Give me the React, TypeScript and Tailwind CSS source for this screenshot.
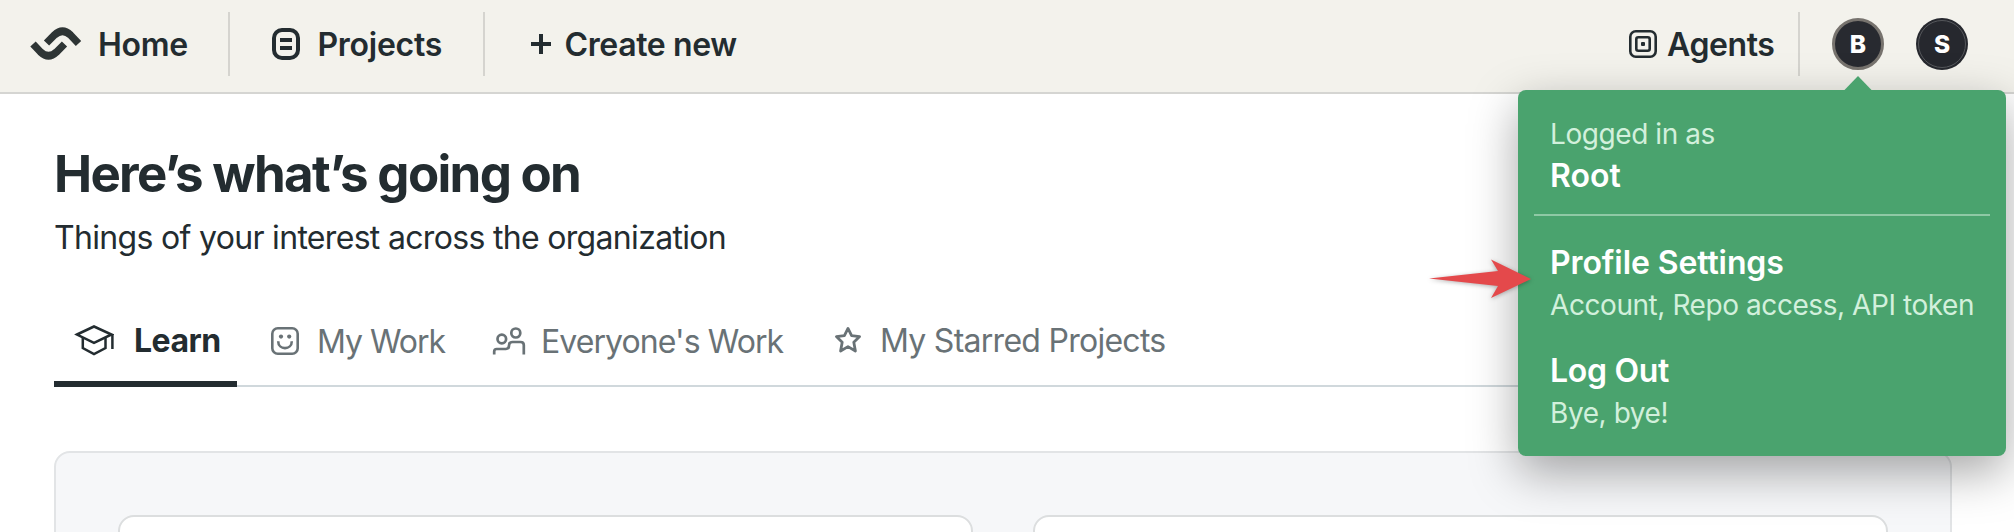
import React from "react";

function Text({ children, className }: { children: React.ReactNode; className: string }) {
  return <span className={"block whitespace-nowrap " + className}>{children}</span>;
}

function Logo() {
  return (
    <svg className="shrink-0" width="52" height="36" viewBox="0 0 52 36" fill="none" stroke="#2e3535" strokeWidth="7.4">
      <path d="M3 18 L10.5 26 Q18.5 33.5 26.5 26 L34.5 18" />
      <path d="M16.5 17 L24.5 9 Q32.5 1.5 40.5 9 L48.5 17.5" />
    </svg>
  );
}

function ProjectsIcon() {
  return (
    <svg className="shrink-0" width="28" height="32" viewBox="0 0 28 32" fill="none" stroke="#232c30" strokeWidth="4">
      <rect x="2" y="2" width="24" height="28" rx="8" />
      <path d="M8 12h12M8 20h12" />
    </svg>
  );
}

function PlusIcon() {
  return (
    <svg className="shrink-0" width="20" height="20" viewBox="0 0 20 20" stroke="#232c30" strokeWidth="4">
      <path d="M10 0v20M0 10h20" />
    </svg>
  );
}

function AgentsIcon() {
  return (
    <svg className="shrink-0" width="28" height="28" viewBox="0 0 28 28" fill="none" stroke="#232c30" strokeWidth="2.6">
      <rect x="1.3" y="1.3" width="25.4" height="25.4" rx="5.5" />
      <rect x="7.3" y="7.3" width="13.4" height="13.4" rx="2" />
      <rect x="12" y="12" width="4" height="4" rx="1" fill="#232c30" stroke="none" />
    </svg>
  );
}

function CapIcon() {
  return (
    <svg className="shrink-0" width="40" height="32" viewBox="0 0 40 32" fill="none" stroke="#232c30" strokeWidth="2.5">
      <path d="M3 10.5 L20 2.5 L37.5 10.5 L20 18.8 Z" />
      <path d="M8.8 13 V24 L20 30 L31.5 24 V13" />
      <path d="M38.4 10 V25" />
    </svg>
  );
}

function SmileIcon() {
  return (
    <svg className="shrink-0" width="28" height="28" viewBox="0 0 28 28" fill="none" stroke="#697276" strokeWidth="2.6">
      <rect x="1.3" y="1.3" width="25.4" height="25.4" rx="5.5" />
      <path d="M7.2 14.2 C7.2 23.4 20.8 23.4 20.8 14.2" />
      <circle cx="10" cy="9.6" r="2.1" fill="#697276" stroke="none" />
      <circle cx="18.2" cy="9.6" r="2.1" fill="#697276" stroke="none" />
    </svg>
  );
}

function PeopleIcon() {
  return (
    <svg className="shrink-0" width="34" height="28" viewBox="0 0 34 28" fill="none" stroke="#697276" strokeWidth="2.7">
      <circle cx="9.8" cy="12" r="4.3" />
      <circle cx="23.8" cy="6" r="4.5" />
      <path d="M2.2 27.5 V24.5 Q2.2 22 4.7 22 H14 Q17 22 17 18.5 Q17 15 20.5 15 H28.5 Q31.8 15 31.8 18 V27.5" />
    </svg>
  );
}

function StarIcon() {
  return (
    <svg className="shrink-0" width="28" height="28" viewBox="0 0 28 28" fill="none" stroke="#697276" strokeWidth="2.8" strokeLinejoin="round">
      <path d="M14 2.4 L17.6 9.6 L25.6 10.6 L19.8 16.2 L21.4 25 L14 20.6 L6.6 25 L8.2 16.2 L2.4 10.6 L10.4 9.6 Z" />
    </svg>
  );
}

function Divider() {
  return <div className="h-16 w-0.5 shrink-0 bg-[#d5d4cf]" />;
}

const NAV = "pt-0.5 text-[32px] leading-10 font-semibold text-[#232c30]";

function Header() {
  return (
    <header className="flex h-[94px] border-b-2 border-[#d5d5d2] bg-[#f3f2ec] pt-3">
      <div className="flex h-16 w-full items-center">
        <div className="flex w-[228px] shrink-0 items-center pl-[30px]">
          <Logo />
          <Text className={NAV + " ml-4 tracking-[-0.3px]"}>Home</Text>
        </div>
        <Divider />
        <div className="flex w-[253px] shrink-0 items-center pl-[42px]">
          <ProjectsIcon />
          <Text className={NAV + " ml-[17.5px] tracking-[-0.28px]"}>Projects</Text>
        </div>
        <Divider />
        <div className="flex items-center pl-[46px]">
          <PlusIcon />
          <Text className={NAV + " ml-[13.5px] tracking-[-0.37px]"}>Create new</Text>
        </div>
        <div className="ml-auto flex w-[385px] shrink-0 items-center">
          <div className="flex w-[169px] shrink-0 items-center">
            <AgentsIcon />
            <Text className={NAV + " ml-[10px] tracking-[-0.4px]"}>Agents</Text>
          </div>
          <Divider />
          <div className="ml-8 flex size-[52px] items-center justify-center rounded-full border-[3px] border-[#77736e] bg-[#282a30]">
            <Text className="text-[24.5px] leading-6 font-extrabold text-white">B</Text>
          </div>
          <div className="ml-8 flex size-[52px] items-center justify-center rounded-full bg-[#26282e] p-0.5">
            <div className="flex size-full items-center justify-center rounded-full border border-[#55575b]">
              <Text className="text-[24.5px] leading-6 font-extrabold text-white">S</Text>
            </div>
          </div>
        </div>
      </div>
    </header>
  );
}

const TAB = "pt-0.5 text-[32px] leading-10 text-[#697276]";

function Tabs() {
  return (
    <nav className="mt-[62px] flex h-[67px] border-b-2 border-[#d0d8dc]">
      <div className="flex h-[67px] w-[183px] shrink-0 items-start border-b-[6px] border-[#232c30] pl-5">
        <div className="flex h-10 items-center">
          <CapIcon />
          <Text className="ml-5 pt-0.5 text-[32px] leading-10 font-bold tracking-[-0.5px] text-[#232c30]">Learn</Text>
        </div>
      </div>
      <div className="flex h-[41px] w-[222px] shrink-0 items-center pl-[34px]">
        <SmileIcon />
        <Text className={TAB + " ml-[18px] tracking-[-1.05px]"}>My Work</Text>
      </div>
      <div className="flex h-[41px] w-[342px] shrink-0 items-center pl-[33px]">
        <PeopleIcon />
        <Text className={TAB + " ml-[15px] tracking-[-0.93px]"}>Everyone's Work</Text>
      </div>
      <div className="flex h-10 items-center pl-[33px]">
        <StarIcon />
        <Text className={TAB + " ml-[18px] tracking-[-0.73px]"}>My Starred Projects</Text>
      </div>
    </nav>
  );
}

const HINT = "text-[28px] leading-10 tracking-[-0.43px] text-[#d2f0dc]";

function ProfileMenu() {
  return (
    <div className="absolute top-[90px] left-[1518px] h-[366px] w-[488px] rounded-lg bg-[#4aa36e] px-4 pt-6 shadow-[0_16px_48px_rgba(0,0,0,0.35)]">
      <svg className="absolute -top-[14px] left-[326px]" width="28" height="15" viewBox="0 0 28 15">
        <path d="M0 14.5 L14 0 L28 14.5 Z" fill="#4aa36e" />
      </svg>
      <div className="flex h-[100px] flex-col px-4">
        <Text className={HINT}>Logged in as</Text>
        <Text className="mt-0.5 text-[32px] leading-10 font-semibold text-white">Root</Text>
      </div>
      <div className="h-0.5 bg-[#8fc9a5]" />
      <div className="flex flex-col px-4 pt-[27px]">
        <Text className="text-[32px] leading-10 font-semibold tracking-[-0.1px] text-white">Profile Settings</Text>
        <Text className={HINT + " mt-0.5"}>Account, Repo access, API token</Text>
        <Text className="mt-[26px] text-[32px] leading-10 font-semibold tracking-[-0.3px] text-white">Log Out</Text>
        <Text className={HINT + " mt-0.5"}>Bye, bye!</Text>
      </div>
    </div>
  );
}

function Pointer() {
  return (
    <svg className="absolute top-[254px] left-[1424px] drop-shadow-[0_1px_2px_rgba(0,0,0,0.3)]" width="112" height="48" viewBox="0 0 112 48">
      <path d="M5 24.5 L74 17 L67 5.5 L107 25 L67 44 L74 32 Z" fill="#e4494b" />
    </svg>
  );
}

export default function App() {
  return (
    <div className="relative h-[532px] w-[2014px] overflow-hidden bg-white font-[Inter,sans-serif]">
      <Header />
      <main className="flex flex-col pr-[62px] pl-[54px]">
        <Text className="mt-[48px] text-[51px] leading-[64px] font-bold tracking-[-1.7px] text-[#232c30]">Here’s what’s going on</Text>
        <Text className="mt-[12px] text-[32px] leading-10 tracking-[-0.68px] text-[#232c30]">Things of your interest across the organization</Text>
        <Tabs />
        <section className="mt-16 flex h-[200px] gap-[60px] rounded-2xl border-2 border-[#e2e4e6] bg-[#f6f7f9] px-[62px] pt-[62px]">
          <div className="h-40 flex-1 rounded-2xl border-2 border-[#dcdedf] bg-white" />
          <div className="h-40 flex-1 rounded-2xl border-2 border-[#dcdedf] bg-white" />
        </section>
      </main>
      <ProfileMenu />
      <Pointer />
    </div>
  );
}
